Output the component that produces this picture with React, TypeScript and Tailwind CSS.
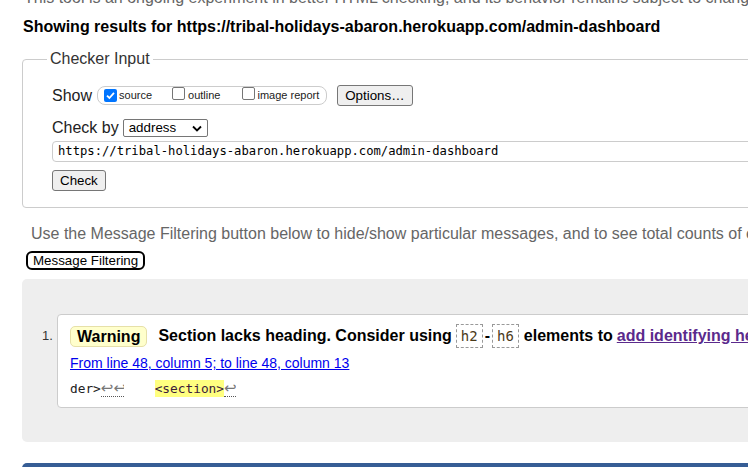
import React from 'react';

const Box: React.FC<{ checked?: boolean }> = ({ checked }) =>
    checked ? (
        <span className="inline-flex h-[13px] w-[13px] items-center justify-center rounded-[2px] bg-[#0075ff]">
            <svg width="11" height="11" viewBox="0 0 11 11">
                <path d="M2 5.6 L4.4 8 L9 2.8" fill="none" stroke="#fff" strokeWidth="1.8" />
            </svg>
        </span>
    ) : (
        <span className="inline-block h-[13px] w-[13px] rounded-[2px] border border-[#767676] bg-white" />
    );

const Btn: React.FC<{ children: React.ReactNode; className?: string }> = ({ children, className }) => (
    <button className={`h-[21px] rounded-[3px] border border-[#767676] bg-[#efefef] px-[7px] text-[13.33px] leading-none text-black ${className ?? ''}`}>
        {children}
    </button>
);

// return-character markers shown in the source extract
const Ret: React.FC<{ n: number }> = ({ n }) => (
    <span
        className="inline-block overflow-hidden whitespace-nowrap border-b border-dotted border-[#555] font-['DejaVu_Sans',sans-serif] text-[15px] leading-[16px] text-[#777]"
        style={{ width: n * 11.5 }}
    >
        {'↩'.repeat(n)}
    </span>
);

const Code: React.FC<{ children: React.ReactNode }> = ({ children }) => (
    <span className="inline-block h-[24px] border border-dashed border-[#999] px-[4px] align-middle font-['DejaVu_Sans_Mono',monospace] text-[14px] font-normal leading-[22px] text-[#4a3a1a]">
        {children}
    </span>
);

const App: React.FC = () => {
    return (
        <div className="h-[467px] w-[748px] overflow-hidden bg-white font-['Liberation_Sans',Arial,sans-serif] text-[#222]">
            <div className="w-[1100px] pl-[22px]">
                <p className="-mt-[11px] ml-[2px] whitespace-nowrap text-[16px] leading-[18px] text-[#666]">
                    This tool is an ongoing experiment in better HTML checking, and its behavior remains subject to change
                </p>
                <h2 className="ml-[1px] mt-[10px] whitespace-nowrap text-[16px] font-bold leading-[20px] text-black">
                    Showing results for https://tribal-holidays-abaron.herokuapp.com/admin-dashboard
                </h2>

                <fieldset className="mt-[12px] rounded-[4px] border border-[#ccc] pb-[16px] pl-[29px]">
                    <legend className="-ml-[5px] px-[3px] text-[16px] leading-[20px] text-[#333]">Checker Input</legend>

                    <div className="mt-[16px] flex h-[21px] items-center">
                        <span className="text-[16px]">Show</span>
                        <div className="ml-[5px] flex h-[19px] items-center rounded-[8px] border border-[#ccc] pl-[6px] pr-[7px] text-[11px]">
                            <Box checked />
                            <span className="ml-[2px]">source</span>
                            <span className="ml-[20px]"><Box /></span>
                            <span className="ml-[3px]">outline</span>
                            <span className="ml-[22px]"><Box /></span>
                            <span className="ml-[2px]">image report</span>
                        </div>
                        <Btn className="ml-[10px]">Options…</Btn>
                    </div>

                    <div className="mt-[13px] flex h-[18px] items-center">
                        <span className="text-[16px]">Check by</span>
                        <div className="ml-[4px] flex h-[18px] w-[85px] items-center justify-between rounded-[2px] border border-[#767676] bg-white pl-[5px] pr-[5px] text-[13.33px] text-black">
                            <span>address</span>
                            <svg width="10" height="7" viewBox="0 0 10 7">
                                <path d="M1 1.5 L5 5.5 L9 1.5" fill="none" stroke="#000" strokeWidth="1.8" />
                            </svg>
                        </div>
                    </div>

                    <div className="mt-[4px] flex h-[21px] items-center rounded-[4px] border border-[#ccc] pl-[5px] font-['DejaVu_Sans_Mono',monospace] text-[12.2px] text-black">
                        https://tribal-holidays-abaron.herokuapp.com/admin-dashboard
                    </div>

                    <Btn className="mt-[8px] block">Check</Btn>
                </fieldset>

                <p className="ml-[9px] mt-[17px] whitespace-nowrap text-[16px] leading-[18px] text-[#666]">
                    Use the Message Filtering button below to hide/show particular messages, and to see total counts of errors and warnings.
                </p>

                <button className="ml-[4px] mt-[8px] block h-[19px] rounded-[6px] border-2 border-black bg-white px-[5px] text-[13.33px] leading-none text-black">
                    Message Filtering
                </button>

                <div className="mt-[9px] h-[163px] rounded-[5px] bg-[#eee] pt-[35px]">
                    <ol className="flex">
                        <li className="flex">
                            <span className="ml-[20px] mt-[14px] w-[15px] text-[13px] leading-[15px] text-[#333]">1.</span>
                            <div className="h-[94px] w-[900px] rounded-[4px] border border-[#ccc] bg-white pl-[12px] pt-[10px]">
                                <p className="flex h-[22px] items-center whitespace-nowrap text-[16px] font-bold text-black">
                                    <span className="inline-block rounded-[5px] border border-[#e6e0a8] bg-[#ffffcc] px-[6px] leading-[19px]">Warning</span>
                                    <span className="ml-[11px]">Section lacks heading. Consider using</span>
                                    <span className="ml-[4px]"><Code>h2</Code></span>
                                    <span className="mx-[2px]">-</span>
                                    <Code>h6</Code>
                                    <span className="ml-[5px]">elements to</span>
                                    <a className="ml-[4px] text-[#5b2a8c] underline">add identifying headings</a>
                                    <span>&nbsp;to all sections.</span>
                                </p>
                                <p className="mt-[8px] text-[14px] leading-[16px]">
                                    <a className="text-[#0000ee] underline">From line 48, column 5; to line 48, column 13</a>
                                </p>
                                <p className="mt-[9px] flex items-center whitespace-pre font-['DejaVu_Sans_Mono',monospace] text-[12.8px] leading-[17px] text-[#222]">
                                    <span>der&gt;</span>
                                    <Ret n={2} />
                                    <span>{'    '}</span>
                                    <span className="bg-[#ffff80] text-[#3a1a3a]">&lt;section&gt;</span>
                                    <Ret n={1} />
                                </p>
                            </div>
                        </li>
                    </ol>
                </div>

                <div className="mt-[21px] h-[30px] rounded-t-[5px] bg-[#365d95]" />
            </div>
        </div>
    );
};

export default App;
